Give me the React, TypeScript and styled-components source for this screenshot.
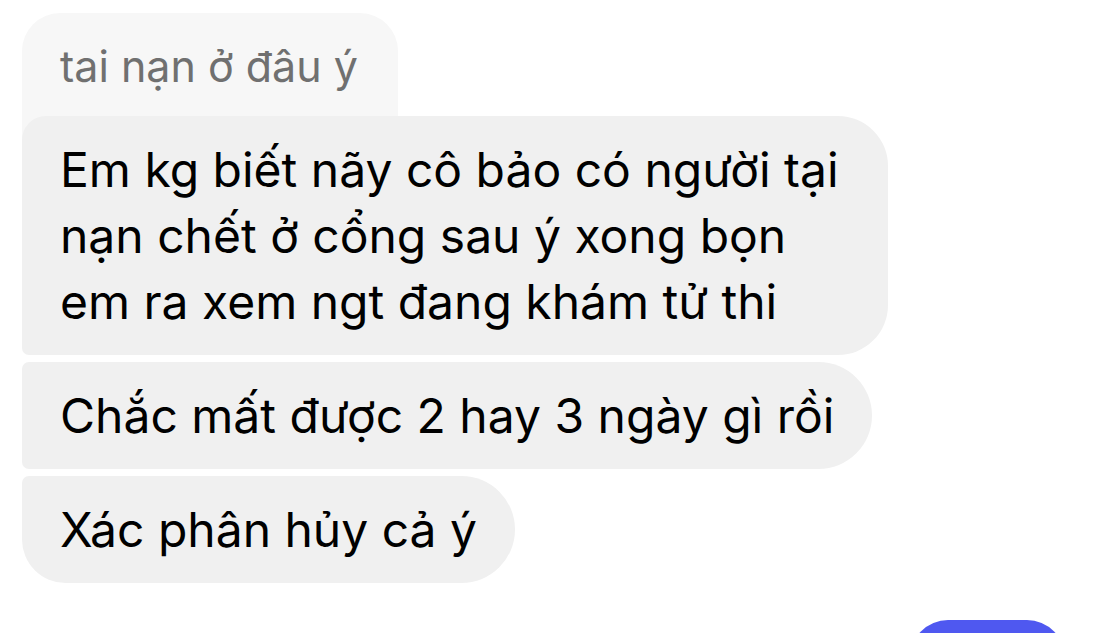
import styled, { createGlobalStyle } from "styled-components";

const GlobalStyle = createGlobalStyle`
  html, body {
    margin: 0;
    padding: 0;
    background: #fff;
    overflow: hidden;
  }
  body {
    font-family: Inter, "Noto Sans", "Liberation Sans", sans-serif;
    -webkit-font-smoothing: antialiased;
  }
`;

const Thread = styled.div`
  width: 1097px;
  height: 633px;
  box-sizing: border-box;
  padding: 13px 32px 0 22px;
  display: flex;
  flex-direction: column;
  align-items: flex-start;
  overflow: hidden;
`;

const ReplyPreview = styled.div`
  background: #f7f7f7;
  color: #707070;
  font-size: 43px;
  line-height: 52px;
  padding: 27px 40px 48px 38px;
  border-radius: 38px 38px 0 0;
  margin-bottom: -24px;
`;

type Pos = "first" | "middle" | "last";

const radius: Record<Pos, string> = {
  first: "24px 50px 50px 7px",
  middle: "7px 54px 54px 7px",
  last: "7px 54px 54px 44px",
};

const Bubble = styled.div<{ $pos: Pos }>`
  position: relative;
  z-index: 1;
  box-sizing: border-box;
  max-width: 866px;
  background: #f0f0f0;
  color: #000;
  font-size: 48px;
  line-height: 66px;
  padding: 21px 38px 20px 38px;
  border-radius: ${(p) => radius[p.$pos]};
  margin-bottom: 7px;
`;

const OutRow = styled.div`
  align-self: stretch;
  display: flex;
  justify-content: flex-end;
  margin-top: 30px;
`;

const OutBubble = styled.div`
  flex-shrink: 0;
  width: 155px;
  height: 107px;
  background: #4f58f0;
  border-radius: 38px 38px 7px 38px;
`;

const App = () => {
  return (
    <>
      <GlobalStyle />
      <Thread>
        <ReplyPreview>tai nạn ở đâu ý</ReplyPreview>
        <Bubble $pos="first">
          Em kg biết nãy cô bảo có người tại nạn chết ở cổng sau ý xong bọn em ra xem ngt đang khám tử thi
        </Bubble>
        <Bubble $pos="middle">Chắc mất được 2 hay 3 ngày gì rồi</Bubble>
        <Bubble $pos="last">Xác phân hủy cả ý</Bubble>
        <OutRow>
          <OutBubble aria-hidden="true" />
        </OutRow>
      </Thread>
    </>
  );
};

export default App;
